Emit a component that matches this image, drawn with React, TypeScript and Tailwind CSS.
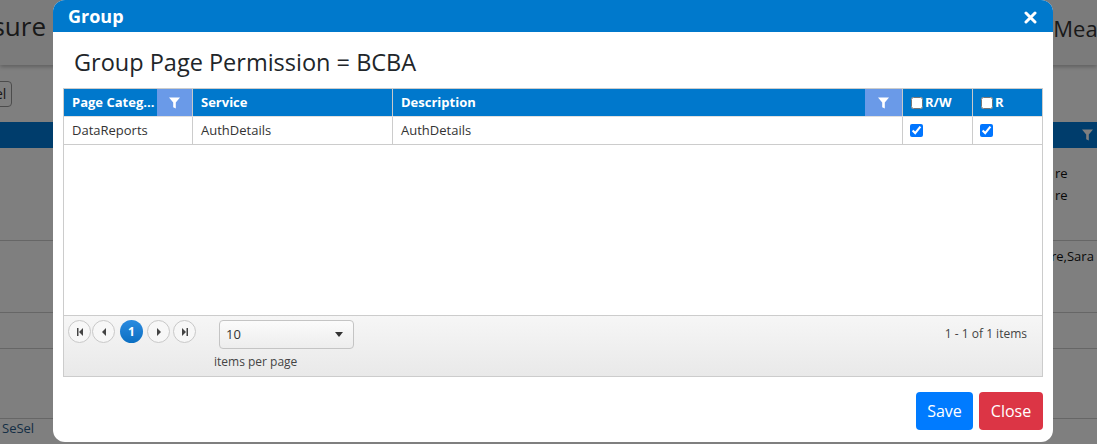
import React from "react";

const Funnel = ({ className = "" }: { className?: string }) => (
  <svg width="11" height="12" viewBox="0 0 11 12" className={className}>
    <path d="M0 0.5h11L6.8 5.6V11.5L4.2 10.2V5.6z" fill="currentColor" />
  </svg>
);

const PagerBtn = ({ children }: { children: React.ReactNode }) => (
  <div className="w-[23px] h-[23px] rounded-full border border-[#c8c8c8] bg-[#f7f7f7] flex items-center justify-center text-[#444]">
    {children}
  </div>
);

export default function App() {
  const font = { fontFamily: '"Segoe UI","Open Sans","Noto Sans",sans-serif' };
  return (
    <div className="relative w-[1097px] h-[444px] overflow-hidden bg-white" style={font}>
      {/* background page */}
      <div className="flex flex-col w-full">
        <div className="h-[65px] bg-[#f6f6f6] shadow-[0_2px_4px_rgba(0,0,0,0.25)] flex items-center justify-between">
          <span className="text-[26px] text-[#333] -ml-[60px] leading-none mb-[14px]">Measure</span>
          <span className="text-[22px] text-[#333] mr-[-46px] leading-none mb-[10px]">Measure</span>
        </div>
        <div className="h-[57px] flex items-center">
          <div className="-ml-[46px] h-[26px] pl-[8px] pr-[5px] border border-[#999] rounded-[4px] text-[14px] text-[#333] flex items-center">Cancel</div>
        </div>
        <div className="h-[26px] bg-[#007ad8] flex items-center justify-end pr-[4px] text-white">
          <Funnel />
        </div>
        <div className="h-[93px] border-b border-[#ccc] flex flex-col items-end pt-[14px] text-[13px] text-[#111] leading-[22px]">
          <span className="mr-[-2px] w-[44px]">re</span>
          <span className="mr-[-2px] w-[44px]">re</span>
        </div>
        <div className="h-[72px] border-b border-[#ccc] flex justify-end pt-[6px] text-[13px] text-[#111]">
          <span className="w-[50px] whitespace-nowrap -mr-[4px]">re,Sara ;</span>
        </div>
        <div className="h-[36px] border-b border-[#ccc]" />
        <div className="h-[70px] border-b border-[#ccc]" />
        <div className="h-[25px] pl-[2px] text-[13px] text-[#2a5d8a]">SeSel</div>
      </div>

      {/* overlay */}
      <div className="absolute inset-0 bg-black/50" />

      {/* modal */}
      <div className="absolute left-[53px] top-0 w-[1000px] h-[442px] bg-white rounded-[12px] overflow-hidden flex flex-col">
        <div className="h-[32px] bg-[#0079cc] flex items-center justify-between pl-[15px] pr-[16px] text-white">
          <span className="text-[18px] font-bold leading-none">Group</span>
          <svg width="13" height="13" viewBox="0 0 13 13" className="mt-[3px]">
            <path d="M2 2L11 11M11 2L2 11" stroke="white" strokeWidth="3" strokeLinecap="round" />
          </svg>
        </div>
        <div className="flex-1 flex flex-col px-[10px]">
          <div className="h-[56px] flex items-center pl-[11px] pt-[6px] text-[23.5px] font-medium text-[#212529] whitespace-nowrap">
            Group Page Permission = BCBA
          </div>
          <div className="w-[980px] h-[289px] border border-[#cccccc] flex flex-col">
            <div className="h-[27px] bg-[#0078cc] flex text-white text-[13px] font-bold">
              <div className="w-[129px] flex items-center border-r border-[#c9c9c9]">
                <span className="flex-1 pl-[8px] whitespace-nowrap">Page Categ...</span>
                <div className="w-[35px] h-full bg-[#6a9ae8] flex items-center justify-center"><Funnel /></div>
              </div>
              <div className="w-[200px] flex items-center pl-[8px] border-r border-[#c9c9c9]">Service</div>
              <div className="w-[510px] flex items-center border-r border-[#c9c9c9]">
                <span className="flex-1 pl-[8px]">Description</span>
                <div className="w-[37px] h-full bg-[#6a9ae8] flex items-center justify-center"><Funnel /></div>
              </div>
              <div className="w-[70px] flex items-center pl-[8px] gap-[2px] border-r border-[#c9c9c9]">
                <input type="checkbox" readOnly className="w-[12px] h-[12px] m-0" />
                <span>R/W</span>
              </div>
              <div className="w-[69px] flex items-center pl-[8px] gap-[2px]">
                <input type="checkbox" readOnly className="w-[12px] h-[12px] m-0" />
                <span>R</span>
              </div>
            </div>
            <div className="h-[29px] flex text-[13px] text-[#333] border-b border-[#cccccc] border-t border-t-[#e0e0e0]">
              <div className="w-[129px] flex items-center pl-[8px] border-r border-[#cccccc]">DataReports</div>
              <div className="w-[200px] flex items-center pl-[8px] border-r border-[#cccccc]">AuthDetails</div>
              <div className="w-[510px] flex items-center pl-[8px] border-r border-[#cccccc]">AuthDetails</div>
              <div className="w-[70px] flex items-center pl-[7px] border-r border-[#cccccc]">
                <input type="checkbox" readOnly checked className="w-[13px] h-[13px] m-0" />
              </div>
              <div className="w-[69px] flex items-center pl-[7px]">
                <input type="checkbox" readOnly checked className="w-[13px] h-[13px] m-0" />
              </div>
            </div>
            <div className="flex-1" />
            <div className="h-[61px] border-t border-[#cccccc] bg-gradient-to-b from-[#f6f6f6] to-[#e9e9e9] flex text-[12px] text-[#444]">
              <div className="flex items-start pt-[4px] pl-[4px] gap-[1px]">
                <PagerBtn>
                  <svg width="8" height="8" viewBox="0 0 8 8"><path d="M1 0h1.5v8H1z M7 0v8L3 4z" fill="currentColor" /></svg>
                </PagerBtn>
                <PagerBtn>
                  <svg width="8" height="8" viewBox="0 0 8 8"><path d="M6 0v8L2 4z" fill="currentColor" /></svg>
                </PagerBtn>
                <div className="w-[23px] h-[23px] ml-[4px] mr-[3px] rounded-full bg-gradient-to-b from-[#2a8be0] to-[#0a6fc2] text-white flex items-center justify-center text-[12px] font-bold">1</div>
                <PagerBtn>
                  <svg width="8" height="8" viewBox="0 0 8 8"><path d="M2 0v8L6 4z" fill="currentColor" /></svg>
                </PagerBtn>
                <div className="ml-[2px]">
                  <PagerBtn>
                    <svg width="8" height="8" viewBox="0 0 8 8"><path d="M1 0v8L5 4z M5.5 0H7v8H5.5z" fill="currentColor" /></svg>
                  </PagerBtn>
                </div>
              </div>
              <div className="flex flex-col ml-[18px] pt-[4px]">
                <div className="ml-[5px] w-[135px] h-[29px] rounded-[4px] border border-[#c4c4c4] bg-gradient-to-b from-[#fbfbfb] to-[#ededed] flex items-center justify-between pl-[6px] pr-[10px] text-[13px] text-[#333]">
                  <span>10</span>
                  <svg width="8" height="5" viewBox="0 0 8 5"><path d="M0 0h8L4 5z" fill="#333" /></svg>
                </div>
                <div className="mt-[4px] text-[12px] text-[#444]">items per page</div>
              </div>
              <div className="flex-1 flex justify-end pt-[9px] pr-[15px] text-[12px] text-[#444]">1 - 1 of 1 items</div>
            </div>
          </div>
          <div className="flex justify-end gap-[6px] mt-[15px]">
            <button className="w-[57px] h-[38px] rounded-[4px] bg-[#007bff] text-white text-[16px]">Save</button>
            <button className="w-[64px] h-[38px] rounded-[4px] bg-[#dc3545] text-white text-[16px]">Close</button>
          </div>
        </div>
      </div>
    </div>
  );
}
